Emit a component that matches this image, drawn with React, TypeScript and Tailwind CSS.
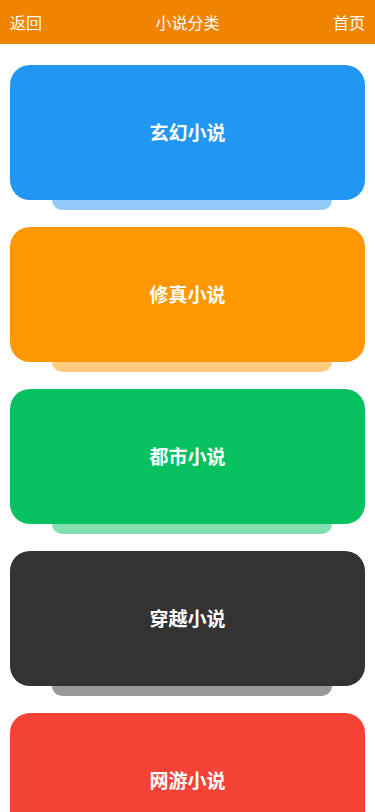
const categories = [
  { name: "玄幻小说", card: "bg-[#2196f3]", tab: "bg-[#90caf9]" },
  { name: "修真小说", card: "bg-[#ff9800]", tab: "bg-[#ffcc80]" },
  { name: "都市小说", card: "bg-[#07c160]", tab: "bg-[#83e0b0]" },
  { name: "穿越小说", card: "bg-[#333333]", tab: "bg-[#999999]" },
  { name: "网游小说", card: "bg-[#f44336]", tab: "bg-[#f9a19a]" },
];

export default function App() {
  return (
    <div
      className="w-[375px] h-[812px] overflow-hidden bg-white"
      style={{ fontFamily: '"Noto Sans CJK SC", "Liberation Sans", sans-serif' }}
    >
      <header className="h-[44px] bg-[#f08300] flex items-center justify-between px-[10px] text-white text-[16px]">
        <span>返回</span>
        <span>小说分类</span>
        <span>首页</span>
      </header>

      <div className="px-[10px] pt-[21px] flex flex-col gap-[17px]">
        {categories.map((c) => (
          <div key={c.name} className="flex flex-col">
            <div
              className={`${c.card} h-[135px] rounded-[20px] flex items-center justify-center text-white text-[19px] font-bold relative z-10`}
            >
              {c.name}
            </div>
            <div className={`${c.tab} h-[10px] w-[280px] ml-[42px] rounded-b-[14px]`} />
          </div>
        ))}
      </div>
    </div>
  );
}
